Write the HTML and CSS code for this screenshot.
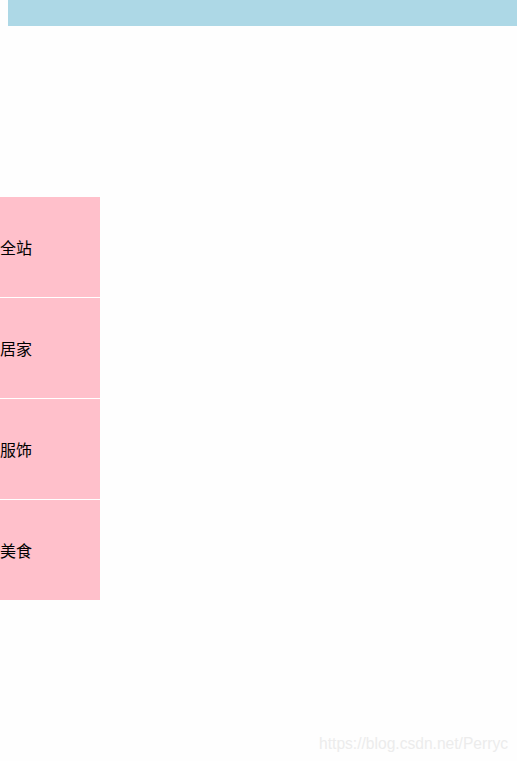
FILE: index.html
```html
<!DOCTYPE html>
<html lang="zh">
<head>
<meta charset="utf-8">
<title>导航</title>
<link rel="stylesheet" href="styles.css">
</head>
<body>
<header class="topbar"></header>
<nav class="sidebar">
  <div class="item">全站</div>
  <div class="item">居家</div>
  <div class="item">服饰</div>
  <div class="item">美食</div>
</nav>
<div class="watermark">https://blog.csdn.net/Perryc</div>
</body>
</html>
```
FILE: styles.css
```css
html, body {
  margin: 0;
  padding: 0;
  background: #fefefe;
  height: 100%;
}
body {
  position: relative;
  font-family: "Noto Sans CJK SC", "Noto Sans", sans-serif;
  font-size: 16px;
  color: #000;
}
.topbar {
  margin-left: 8px;
  height: 26px;
  background: #add8e6;
}
.sidebar {
  margin-top: 171px;
  width: 100px;
  display: flex;
  flex-direction: column;
}
.item {
  height: 100px;
  background: #ffc0cb;
  display: flex;
  align-items: center;
  border-bottom: 1px solid #fff;
}
.item:last-child {
  border-bottom: none;
}
.watermark {
  position: absolute;
  right: 9px;
  bottom: 8px;
  font-family: "Liberation Sans", Arial, sans-serif;
  font-size: 15.6px;
  color: #ececec;
}
```
